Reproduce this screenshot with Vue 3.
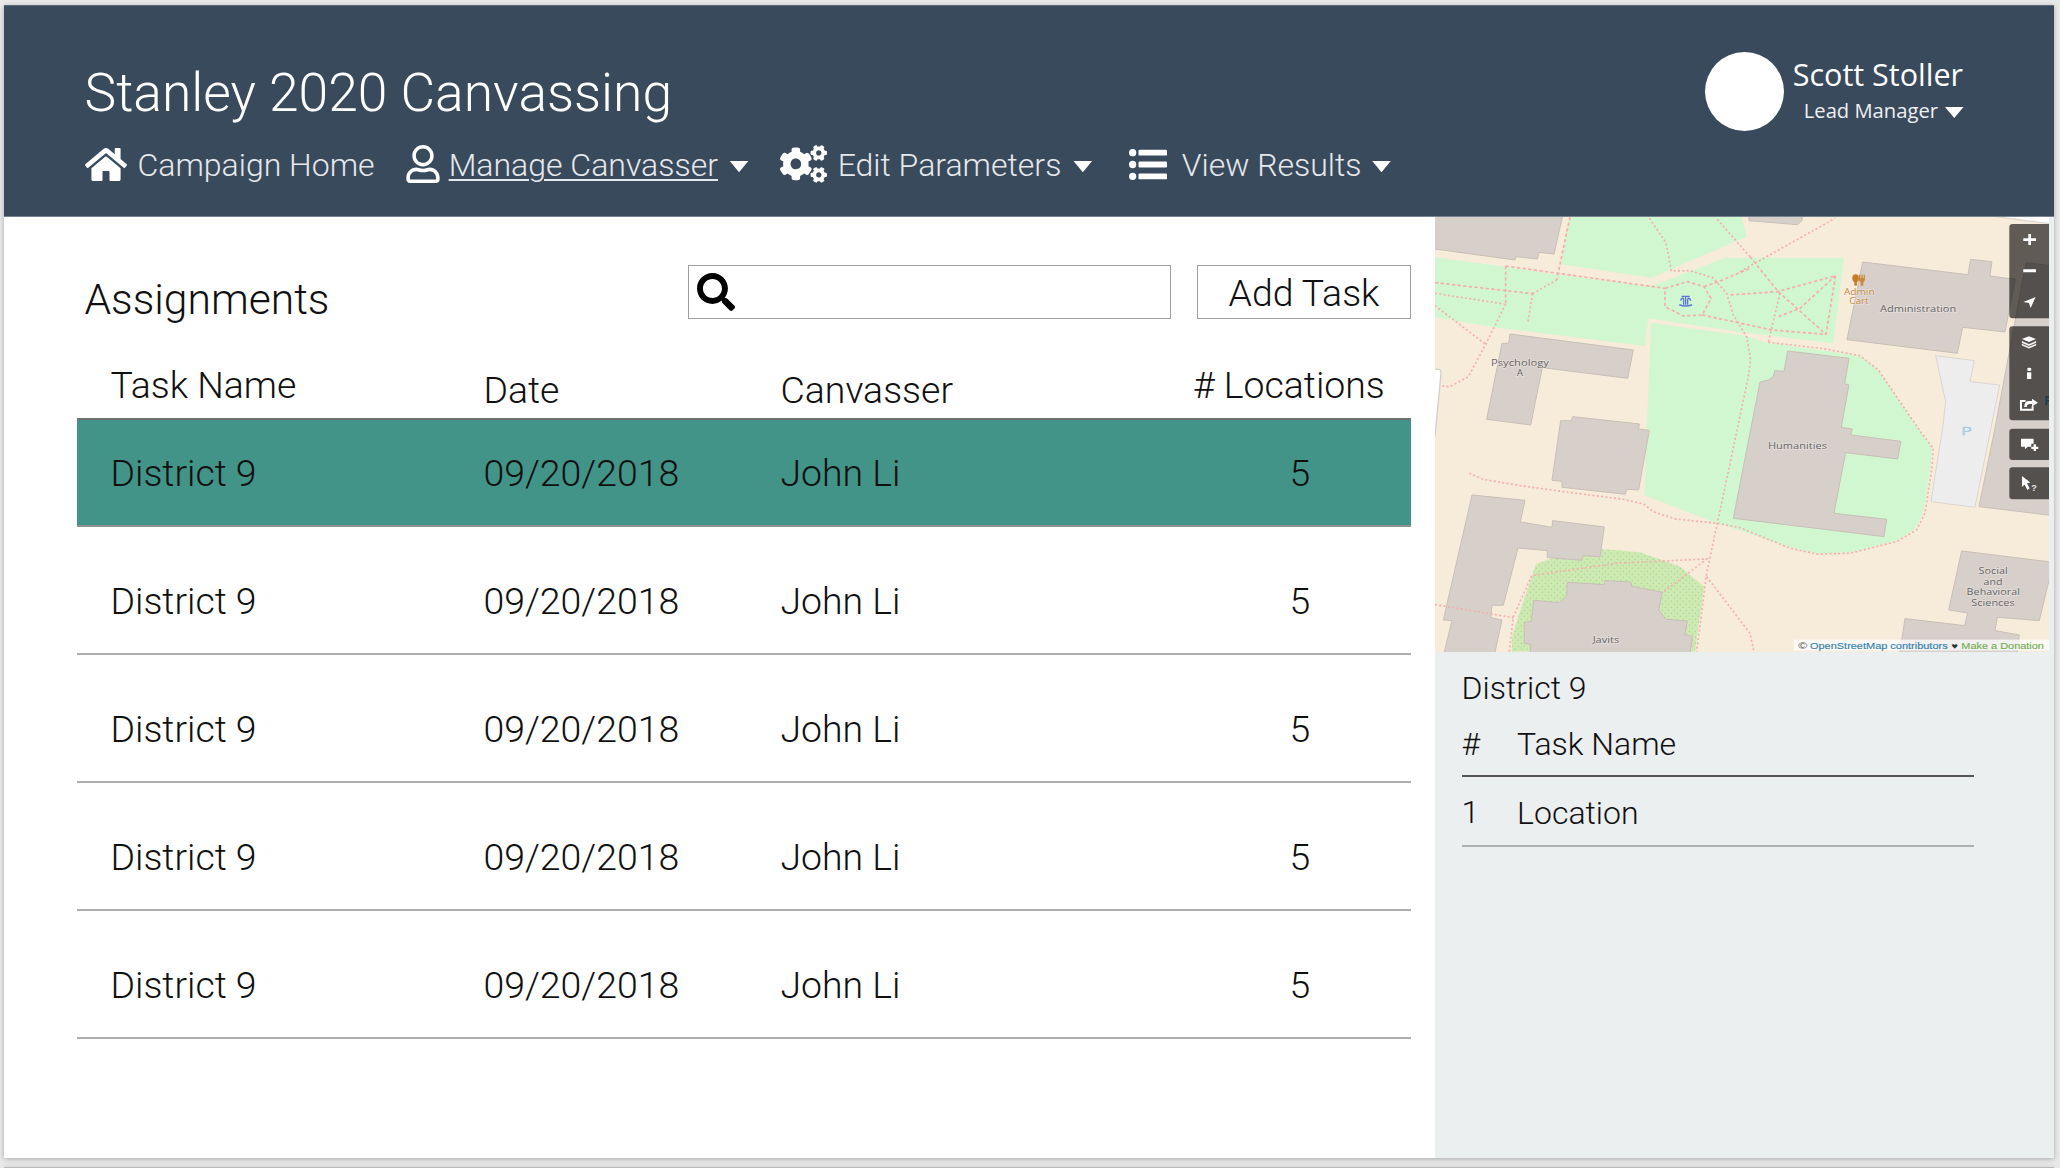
<script setup>
const homePath = 'M488 312.7V456c0 13.3-10.7 24-24 24H348c-6.6 0-12-5.4-12-12V356c0-6.6-5.4-12-12-12h-72c-6.6 0-12 5.4-12 12v112c0 6.6-5.4 12-12 12H112c-13.3 0-24-10.7-24-24V312.7c0-3.6 1.6-7 4.4-9.3l188-154.8c4.4-3.6 10.8-3.6 15.3 0l188 154.8c2.7 2.3 4.3 5.7 4.3 9.3zm83.6-60.9L488 183V44.4c0-6.6-5.4-12-12-12h-56c-6.6 0-12 5.4-12 12V117l-89.5-73.7c-17.7-14.6-43.3-14.6-61 0L4.4 251.8c-5.1 4.2-5.8 11.8-1.6 16.9l25.5 31c4.2 5.1 11.8 5.8 16.9 1.6l235.2-193.7c4.4-3.6 10.8-3.6 15.3 0l235.2 193.7c5.1 4.2 12.7 3.5 16.9-1.6l25.5-31c4.2-5.2 3.4-12.7-1.7-16.9z'
const userPath = 'M313.6 304c-28.7 0-42.5 16-89.6 16-47.1 0-60.8-16-89.6-16C60.2 304 0 364.2 0 438.4V464c0 26.5 21.5 48 48 48h352c26.5 0 48-21.5 48-48v-25.6c0-74.2-60.2-134.4-134.4-134.4zM400 464H48v-25.6c0-47.6 38.8-86.4 86.4-86.4 14.6 0 38.3 16 89.6 16 51.7 0 74.9-16 89.6-16 47.6 0 86.4 38.8 86.4 86.4V464zM224 288c79.5 0 144-64.5 144-144S303.5 0 224 0 80 64.5 80 144s64.5 144 144 144zm0-240c52.9 0 96 43.1 96 96s-43.1 96-96 96-96-43.1-96-96 43.1-96 96-96z'
const smallGear = 'M512.1 191l-8.2 14.3c-3 5.3-9.4 7.5-15.1 5.4-11.8-4.4-22.6-10.7-32.1-18.6-4.6-3.8-5.8-10.5-2.8-15.7l8.2-14.3c-6.9-8-12.3-17.3-15.9-27.4h-16.5c-6 0-11.2-4.3-12.2-10.3-2-12-2.1-24.6 0-37.1 1-6 6.2-10.4 12.2-10.4h16.5c3.6-10.1 9-19.4 15.9-27.4l-8.2-14.3c-3-5.2-1.9-11.9 2.8-15.7 9.5-7.9 20.4-14.2 32.1-18.6 5.7-2.1 12.1.1 15.1 5.4l8.2 14.3c10.5-1.9 21.2-1.9 31.7 0L552 6.3c3-5.3 9.4-7.5 15.1-5.4 11.8 4.4 22.6 10.7 32.1 18.6 4.6 3.8 5.8 10.5 2.8 15.7l-8.2 14.3c6.9 8 12.3 17.3 15.9 27.4h16.5c6 0 11.2 4.3 12.2 10.3 2 12 2.1 24.6 0 37.1-1 6-6.2 10.4-12.2 10.4h-16.5c-3.6 10.1-9 19.4-15.9 27.4l8.2 14.3c3 5.2 1.9 11.9-2.8 15.7-9.5 7.9-20.4 14.2-32.1 18.6-5.7 2.1-12.1-.1-15.1-5.4l-8.2-14.3c-10.4 1.9-21.2 1.9-31.7 0zm-10.5-58.8c38.5 29.6 82.4-14.3 52.8-52.8-38.5-29.7-82.4 14.3-52.8 52.8z'
const bigGear = 'M386.3 286.1l33.7 16.8c10.1 5.8 14.5 18.1 10.5 29.1-8.9 24.2-26.4 46.4-42.6 65.8-7.4 8.9-20.2 11.1-30.3 5.3l-29.1-16.8c-16 13.7-34.6 24.6-54.9 31.7v33.6c0 11.6-8.3 21.6-19.7 23.6-24.6 4.2-50.4 4.4-75.9 0-11.5-2-20-11.9-20-23.6V418c-20.3-7.2-38.9-18-54.9-31.7L74 403c-10 5.8-22.9 3.6-30.3-5.3-16.2-19.4-33.3-41.6-42.2-65.7-4-10.9.4-23.2 10.5-29.1l33.3-16.8c-3.9-20.9-3.9-42.4 0-63.4L12 205.8c-10.1-5.8-14.6-18.1-10.5-29 8.9-24.2 26-46.4 42.2-65.8 7.4-8.9 20.2-11.1 30.3-5.3l29.1 16.8c16-13.7 34.6-24.6 54.9-31.7V57.1c0-11.5 8.2-21.5 19.6-23.5 24.6-4.2 50.5-4.4 76-.1 11.5 2 20 11.9 20 23.6v33.6c20.3 7.2 38.9 18 54.9 31.7l29.1-16.8c10-5.8 22.9-3.6 30.3 5.3 16.2 19.4 33.2 41.6 42.1 65.8 4 10.9.1 23.2-10 29.1l-33.7 16.8c3.9 21 3.9 42.5 0 63.5zm-117.6 21.1c59.2-77-28.7-164.9-105.7-105.7-59.2 77 28.7 164.9 105.7 105.7z'
const searchPath = 'M505 442.7L405.3 343c-4.5-4.5-10.6-7-17-7H372c27.6-35.3 44-79.7 44-128C416 93.1 322.9 0 208 0S0 93.1 0 208s93.1 208 208 208c48.3 0 92.7-16.4 128-44v16.3c0 6.4 2.5 12.5 7 17l99.7 99.7c9.4 9.4 24.6 9.4 33.9 0l28.3-28.3c9.4-9.4 9.4-24.6.1-34zM208 336c-70.7 0-128-57.2-128-128 0-70.7 57.2-128 128-128 70.7 0 128 57.2 128 128 0 70.7-57.2 128-128 128z'

const tasks = Array.from({ length: 5 }, (_, i) => ({
  id: i, name: 'District 9', date: '09/20/2018', canvasser: 'John Li', count: 5, selected: i === 0,
}))

const lawns = [
  '418,21 935,21 950,80 665,203 392,162',
  '15,142 225,170 380,194 665,229 885,143 1242,143 1210,400 930,366 655,325 645,408 210,354 15,322',
  '663,338 950,378 1010,398 1290,437 1345,480 1420,590 1475,670 1507,715 1500,780 1480,910 1455,958 1398,993 1260,1028 1160,1030 1080,1012 930,962 862,940 643,856',
]
const garden = '515,1017 630,1027 750,1070 822,1130 795,1325 245,1325 247,1280 265,1220 318,1062 350,1050'
const buildings = [
  '0,0 402,0 372,132 327,127 322,147 258,140 255,150 0,115',
  '240,372 610,420 593,505 337,473 302,645 170,628 216,400 236,400',
  '392,632 424,632 428,620 628,642 626,657 658,661 626,840 590,838 586,853 396,832 396,814 366,811',
  '126,855 285,871 271,936 366,952 368,932 523,951 510,1041 460,1037 456,1051 352,1043 352,1022 264,1014 220,1186 186,1186 182,1223 216,1230 190,1350 37,1350 66,1232 40,1230',
  '412,1117 523,1124 525,1112 603,1116 605,1129 697,1147 686,1200 708,1228 772,1233 764,1274 788,1280 778,1340 300,1340 302,1304 283,1300 283,1237 304,1234 311,1171 388,1178 410,1158',
  '957,0 1118,0 1116,32 1102,44 957,32',
  '1298,156 1614,194 1622,148 1686,155 1680,198 1756,208 1725,366 1598,352 1582,430 1251,389',
  '1788,158 1870,168 1870,917 1647,890 1695,655',
  '1073,423 1257,445 1244,522 1257,524 1234,652 1267,657 1262,675 1413,694 1403,747 1247,728 1212,910 1370,928 1362,980 910,925 990,516 1015,510 1030,500 1034,482 1062,484',
  '1595,1023 1870,1057 1828,1232 1702,1222 1695,1262 1768,1275 1760,1340 1408,1340 1425,1226 1604,1247 1613,1209 1556,1200',
]
const wideTrails = [
  '15,218 308,251', '420,21 380,210', '227,168 227,282', '227,168 705,235',
  '705,235 772,215 822,230 843,265 817,315 760,318 705,290 705,235',
  '817,315 1025,360 1188,373 1217,197 1043,245 897,255',
  '822,230 865,215 960,175', '1217,197 1110,295 1040,322', '960,140 1045,245 1188,373',
]
const thinTrails = [
  '308,251 380,210', '15,250 222,282', '15,287 167,403', '227,282 167,403 115,500 60,530 30,528',
  '308,251 293,340',
  '658,25 708,98 724,183 780,182 848,203 890,250 910,315 950,380 962,450 955,500 915,690 862,940 830,1090 800,1325',
  '930,185 1215,25', '862,28 960,140', '1050,250 1015,397',
  '1015,397 1180,416 1290,437 1345,480 1420,590 1475,670 1510,715 1505,780 1485,910 1460,960 1400,995 1260,1030 1160,1032 1080,1015 930,953 862,940 735,927 670,905 640,882 580,868 400,845 270,827 160,808 118,790',
  '15,1184 250,1223', '238,1325 250,1220 305,1097 560,1060 830,1047 700,1147',
  '830,1100 960,1270 972,1325',
]
const labels = [
  { t: 'Psychology', x: 183, y: 468, w: 174 }, { t: 'A', x: 260, y: 498, w: 19 },
  { t: 'Administration', x: 1350, y: 307, w: 229 }, { t: 'Humanities', x: 1014, y: 718, w: 177 },
  { t: 'Javits', x: 488, y: 1300, w: 80 }, { t: 'Social', x: 1646, y: 1093, w: 87 },
  { t: 'and', x: 1661, y: 1125, w: 57 }, { t: 'Behavioral', x: 1610, y: 1156, w: 160 },
  { t: 'Sciences', x: 1624, y: 1187, w: 130 },
]
</script>

<template>
  <div class="stage">
    <div class="slide">
      <header class="top">
        <div class="brand">
          <h1>Stanley 2020 Canvassing</h1>
          <nav>
            <a class="item home">
              <svg width="42" height="33" viewBox="0 32 576 448" preserveAspectRatio="none"><path :d="homePath" /></svg>
              <span>Campaign Home</span>
            </a>
            <a class="item manage">
              <svg width="34" height="38" viewBox="0 0 448 512"><path :d="userPath" /></svg>
              <span class="current">Manage Canvasser</span>
              <i class="caret"></i>
            </a>
            <a class="item edit">
              <svg width="47" height="38" viewBox="0 0 640 512"><path :d="bigGear" /><path :d="smallGear" /><path :d="smallGear" transform="translate(0 298.9)" /></svg>
              <span>Edit Parameters</span>
              <i class="caret"></i>
            </a>
            <a class="item results">
              <svg width="38" height="31" viewBox="0 47 512 418" preserveAspectRatio="none">
                <circle cx="49" cy="96" r="49" /><circle cx="49" cy="256" r="49" /><circle cx="49" cy="416" r="49" />
                <rect x="128" y="56" width="384" height="80" rx="16" /><rect x="128" y="216" width="384" height="80" rx="16" /><rect x="128" y="376" width="384" height="80" rx="16" />
              </svg>
              <span>View Results</span>
              <i class="caret"></i>
            </a>
          </nav>
        </div>
        <div class="user">
          <div class="avatar"></div>
          <div class="who">
            <div class="name">Scott Stoller</div>
            <div class="role"><span>Lead Manager</span><i class="caret small"></i></div>
          </div>
        </div>
      </header>

      <div class="body">
        <main>
          <div class="toolbar">
            <h2>Assignments</h2>
            <label class="search"><svg width="38" height="38" viewBox="0 0 512 512"><path :d="searchPath" /></svg></label>
            <button>Add Task</button>
          </div>
          <div class="table">
            <div class="row head">
              <span>Task Name</span><span class="low">Date</span><span class="low">Canvasser</span><span># Locations</span>
            </div>
            <div v-for="t in tasks" :key="t.id" class="row" :class="{ selected: t.selected }">
              <span>{{ t.name }}</span><span>{{ t.date }}</span><span>{{ t.canvasser }}</span><span class="count">{{ t.count }}</span>
            </div>
          </div>
        </main>

        <aside>
          <svg class="map" viewBox="15 21 1843 1304" preserveAspectRatio="none">
            <defs>
              <pattern id="dots" width="18" height="18" patternUnits="userSpaceOnUse">
                <circle cx="4" cy="4" r="2.6" fill="#b5d79a" /><circle cx="13" cy="13" r="2.6" fill="#b5d79a" />
              </pattern>
            </defs>
            <rect x="0" y="0" width="1900" height="1400" fill="#f7ebd9" />
            <polygon v-for="p in lawns" :key="p" :points="p" fill="#d1f7d0" />
            <polygon :points="garden" fill="#cdeab2" />
            <polygon :points="garden" fill="url(#dots)" />
            <polygon points="1660,15 1870,15 1870,42" fill="#fff" stroke="#d5d2cd" stroke-width="3" />
            <path d="M0 478H26Q33 478 33 490L15 680H0Z" fill="#fff" stroke="#d0cfcd" stroke-width="4" />
            <polygon points="1517,437 1633,452 1620,515 1709,525 1635,892 1503,875 1538,655 1547,575" fill="#ededed" stroke="#d9d6d2" stroke-width="3" />
            <polygon v-for="p in buildings" :key="p" :points="p" fill="#d7cfca" stroke="#c9bfb7" stroke-width="3" />
            <polyline v-for="p in wideTrails" :key="p" :points="p" class="trail wide" />
            <polyline v-for="p in thinTrails" :key="p" :points="p" class="trail" />

            <text v-for="l in labels" :key="l.t" :x="l.x" :y="l.y" :textLength="l.w" lengthAdjust="spacingAndGlyphs" class="label">{{ l.t }}</text>
            <text x="1242" y="255" textLength="92" lengthAdjust="spacingAndGlyphs" class="label cafe">Admin</text>
            <text x="1258" y="283" textLength="58" lengthAdjust="spacingAndGlyphs" class="label cafe">Cart</text>
            <text x="1594" y="674" textLength="32" lengthAdjust="spacingAndGlyphs" class="parking">P</text>
            <g fill="#c77d27">
              <ellipse cx="1277" cy="205" rx="10" ry="12" /><rect x="1273" y="212" width="8" height="15" rx="3" />
              <path d="M1287 194h4v10h3v-10h4v10h3v-10h4v15q0 6-5 7v11h-8v-11q-5-1-5-7Z" opacity=".85" />
            </g>
            <g fill="none" stroke="#5d74d8" stroke-width="4">
              <path d="M767 284V259M755 259H779M761 266V284M773 266V284M752 272Q754 264 761 264M782 272Q780 264 773 264" />
              <path d="M748 284Q767 292 786 284" stroke-width="5" />
            </g>

            <rect x="1091" y="1289" width="767" height="33" fill="#fff" opacity=".7" />
            <g class="credit">
              <text x="1105" y="1316" textLength="27" lengthAdjust="spacingAndGlyphs" fill="#444">©</text>
              <text x="1140" y="1316" textLength="413" lengthAdjust="spacingAndGlyphs" fill="#2f7fb0" stroke="#2f7fb0">OpenStreetMap contributors</text>
              <text x="1564" y="1316" textLength="20" lengthAdjust="spacingAndGlyphs" fill="#333">♥</text>
              <text x="1594" y="1316" textLength="248" lengthAdjust="spacingAndGlyphs" fill="#74ad55" stroke="#74ad55">Make a Donation</text>
            </g>

            <g fill="#000" fill-opacity=".61">
              <path d="M1870 42H1748Q1738 42 1738 52V315Q1738 325 1748 325H1870Z" />
              <path d="M1870 349H1748Q1738 349 1738 359V621Q1738 631 1748 631H1870Z" />
              <path d="M1870 656H1748Q1738 656 1738 666V740Q1738 750 1748 750H1870Z" />
              <path d="M1870 772H1748Q1738 772 1738 782V858Q1738 868 1748 868H1870Z" />
            </g>
            <g fill="#fff">
              <path d="M1795 72h8v13h15v8h-15v12h-8v-12h-15v-8h15ZM1780 178h38v9h-38ZM1817 261L1802 294L1797 279L1780 276Z" />
              <path d="M1797 379l21 8-21 9-21-9Z" />
              <path d="M1776 394l21 9 21-9v4l-21 9-21-9ZM1776 402l21 9 21-9v4l-21 9-21-9Z" stroke="#fff" stroke-width="1" />
              <rect x="1792" y="473" width="12" height="10" rx="4" /><path d="M1791 487h13v20h-13Z" />
              <path d="M1806 566l18 12-18 12v-8h-7q-8 0-9 9h-7q0-18 14-18h9Z" />
              <path d="M1787 573h-14v26h35v-10" fill="none" stroke="#fff" stroke-width="6" />
              <path d="M1775 686h34q2 0 2 3v12h-7v9h-11l-8 8v-8h-10q-2 0-2-3v-18q0-3 2-3Z" />
              <path d="M1811 703h7v7h7v7h-7v6h-7v-6h-7v-7h7Z" />
              <path d="M1776 798l25 20-10 2 8 16-7 4-8-16-8 7Z" />
              <text x="1804" y="842" font-size="27" font-weight="bold" font-family="Liberation Sans, sans-serif" opacity=".85">?</text>
            </g>
            <text x="1843" y="585" font-size="36" font-weight="bold" font-family="Open Sans, sans-serif" fill="#1f3d52">F</text>
          </svg>
          <section class="detail">
            <h3>District 9</h3>
            <div class="line first"><span>#</span><span>Task Name</span></div>
            <div class="line"><span class="num">1</span><span>Location</span></div>
          </section>
        </aside>
      </div>
    </div>
    <div class="next"></div>
  </div>
</template>

<style>
body { background: #e9e9e9; overflow: hidden; }
</style>

<style scoped>
.stage {
  box-sizing: border-box; height: 1168px; width: 2060px; padding: 5px 6px 0 4px; overflow: hidden;
  display: flex; flex-direction: column; justify-content: space-between; background: #e9e9e9;
  font-family: Roboto, "Liberation Sans", sans-serif; font-weight: 300; color: #101010;
}
.slide { height: 1153px; display: flex; flex-direction: column; background: #fff; box-shadow: 0 1px 5px rgba(0, 0, 0, .28); }
.next { height: 1px; background: #b9b9b9; box-shadow: 0 0 4px rgba(0, 0, 0, .3); }
h1, h2, h3 { margin: 0; font-weight: 300; }
svg { display: block; flex: none; }

.top {
  box-sizing: border-box; height: 212px; flex: none; display: flex; justify-content: space-between;
  padding: 0 91px 0 80.5px; background: #394a5c; color: #fff;
  border-top: 1px solid #5d6c7a; border-bottom: 1px solid #76828f;
}
.brand { padding-top: 56px; }
h1 { font-size: 53.4px; line-height: 62px; white-space: nowrap; }
nav { display: flex; margin-top: 19.4px; height: 44px; }
.item { display: flex; align-items: center; font-size: 32px; line-height: 44px; white-space: nowrap; }
.item svg { fill: #fff; margin-top: -2px; }
.item span { color: #e6e9ec; }
.home { gap: 10.2px; margin-left: .8px; }
.manage { gap: 8.8px; margin-left: 31.3px; }
.edit { gap: 10.2px; margin-left: 31.7px; }
.results { gap: 14.3px; margin-left: 36.9px; }
.item .current { text-decoration: underline; text-decoration-thickness: 1.5px; text-underline-offset: 3px; }
.caret { width: 19.4px; height: 11.6px; background: #fff; clip-path: polygon(0 0, 100% 0, 50% 100%); margin-top: 2px; }
.manage .caret { margin-left: 2.6px; }
.edit .caret { margin-left: 1.6px; }
.results .caret { margin-left: -4px; }
.user { display: flex; gap: 8.5px; padding-top: 46px; font-family: "Open Sans", "Noto Sans", sans-serif; font-weight: 400; }
.avatar { width: 79px; height: 79px; border-radius: 50%; background: #fff; }
.who { padding-top: 2px; }
.name { font-size: 30.5px; line-height: 40px; white-space: nowrap; }
.role { display: flex; justify-content: flex-end; align-items: center; gap: 7px; margin-top: 1.5px; font-size: 20.2px; line-height: 28px; color: #eef0f2; }
.caret.small { width: 18.5px; height: 11px; margin: 6px -.5px 0 0; }

.body { flex: 1; display: flex; }
main { flex: 1; padding: 48px 24px 0 73px; }
.toolbar { display: flex; height: 54px; }
h2 { margin: 8.6px auto 0 7.5px; font-size: 42.6px; line-height: 50px; }
.search { box-sizing: border-box; width: 483px; height: 54px; border: 1.5px solid #a0a0a0; padding: 7px 8px; margin-right: 26px; }
.search svg { fill: #000; }
button {
  box-sizing: border-box; width: 214px; height: 54px; border: 1.5px solid #a0a0a0; background: #fff; padding: 1px 0 0;
  font: 300 37.4px/44px Roboto, sans-serif; color: #101010;
}
.row {
  box-sizing: border-box; display: grid; grid-template-columns: 373px 297px 412.5px 1fr; align-items: end;
  height: 128.15px; padding: 0 0 30px 33.5px; border-bottom: 2px solid #adadad;
  font-size: 37.4px; line-height: 44px; white-space: nowrap;
}
.row.head { height: 101px; padding-bottom: 11.4px; border-bottom: 2px solid #6e7271; }
.low { margin-bottom: -5px; }
.row.selected { height: 106.5px; background: #439488; border-bottom-color: #8b9490; }
.count { padding-left: 96.5px; }

aside { width: 619px; flex: none; background: #ebeff0; }
.map { width: 614.3px; height: 434.6px; }
.detail { padding: 17px 0 0 26.6px; width: 512.7px; font-size: 32px; line-height: 38px; }
h3 { font-size: 32px; line-height: 38px; }
.line { box-sizing: border-box; height: 69.5px; display: grid; grid-template-columns: 55.5px 1fr; align-items: end; padding-bottom: 12.5px; border-bottom: 2px solid #aeb0b1; }
.line.first { height: 70.7px; border-bottom-color: #56545a; }
.num { position: relative; top: -1px; }

.trail { fill: none; stroke: #f5aeab; stroke-width: 5; stroke-dasharray: 6 7; }
.trail.wide { stroke-dasharray: 10 7; }
.label { font: 400 25.5px "Open Sans", "Noto Sans", sans-serif; fill: #66625f; paint-order: stroke; stroke: rgba(255, 255, 255, .35); stroke-width: 4px; }
.label.cafe { fill: #c48a42; }
.parking { font: 400 34px "Open Sans", sans-serif; fill: #a3cde6; stroke: #a3cde6; stroke-width: 1px; }
.credit { font: 400 26px "Liberation Sans", Arial, sans-serif; stroke-width: .4px; }
</style>
